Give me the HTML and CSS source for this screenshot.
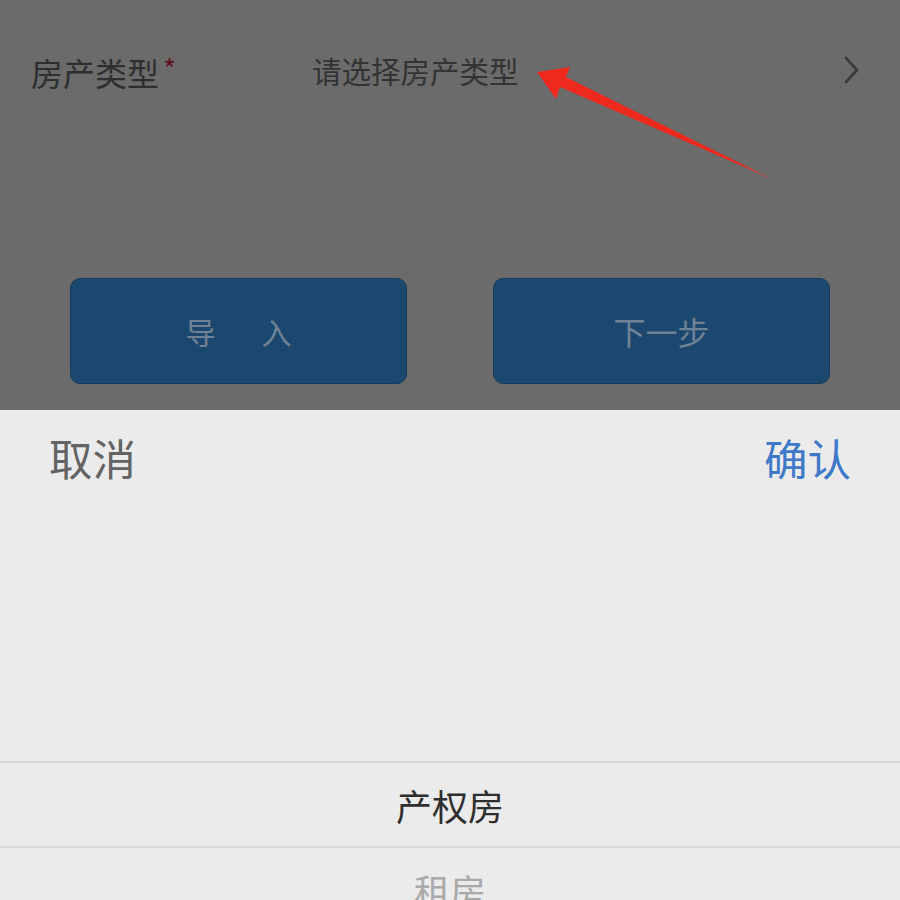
FILE: index.html
```html
<!DOCTYPE html>
<html lang="zh-CN">
<head>
<meta charset="utf-8">
<title>房产类型</title>
<link rel="stylesheet" href="styles.css">
</head>
<body>
<div class="page">
  <div class="overlay">
    <div class="form-row">
      <div class="label">房产类型<span class="req">*</span></div>
      <div class="value">请选择房产类型</div>
      <svg class="chevron" width="20" height="30" viewBox="0 0 20 30">
        <path d="M4 3 L15 15 L4 27" fill="none" stroke="#3a3a3a" stroke-width="2.6" stroke-linecap="round" stroke-linejoin="round"/>
      </svg>
    </div>
    <div class="buttons">
      <div class="btn"><span>导</span><span>入</span></div>
      <div class="btn wide"><span>下一步</span></div>
    </div>
    <svg class="arrow" width="900" height="410" viewBox="0 0 900 410">
      <polygon points="537,72 570,67 566,77 772,179 560,87 556,99" fill="#ee2a1f"/>
    </svg>
  </div>
  <div class="sheet">
    <div class="sheet-header">
      <span class="cancel">取消</span>
      <span class="confirm">确认</span>
    </div>
    <div class="picker">
      <div class="option selected">产权房</div>
      <div class="option faded">租房</div>
    </div>
  </div>
</div>
</body>
</html>
```

FILE: styles.css
```css
html, body {
  margin: 0;
  padding: 0;
}
body {
  width: 900px;
  height: 900px;
  overflow: hidden;
  font-family: "Noto Sans CJK SC", "Noto Sans", sans-serif;
  background: #ebebeb;
}
.page {
  width: 900px;
  height: 900px;
  display: flex;
  flex-direction: column;
}
.overlay {
  position: relative;
  height: 410px;
  background: #6b6b6b;
  flex: none;
}
.form-row {
  display: flex;
  align-items: center;
  height: 60px;
  padding: 41px 38px 0 31px;
}
.label {
  width: 281px;
  font-size: 32px;
  color: #2e2e2e;
  line-height: 1;
}
.req {
  color: #5e1420;
  font-size: 28px;
  margin-left: 4px;
  vertical-align: 6px;
}
.value {
  flex: 1;
  font-size: 29.5px;
  color: #333333;
  line-height: 1;
}
.chevron {
  display: block;
  margin-top: -2px;
}
.buttons {
  display: flex;
  gap: 86px;
  padding: 177px 0 0 70px;
}
.btn {
  width: 337px;
  height: 106px;
  box-sizing: border-box;
  border-radius: 10px;
  background: #1c4870;
  border: 1px solid #163b5c;
  display: flex;
  align-items: center;
  justify-content: center;
  gap: 46px;
  font-size: 30px;
  color: #6f8296;
  line-height: 1;
}
.wide {
  font-size: 32px;
}
.arrow {
  position: absolute;
  left: 0;
  top: 0;
}
.sheet {
  flex: 1;
  background: #ebebeb;
  display: flex;
  flex-direction: column;
}
.sheet-header {
  height: 96px;
  padding: 0 49px 4px;
  display: flex;
  align-items: center;
  justify-content: space-between;
  font-size: 43.5px;
  line-height: 1;
}
.cancel {
  color: #636363;
}
.confirm {
  color: #3e78c8;
}
.picker {
  padding-top: 251px;
}
.option {
  height: 83px;
  border-top: 2px solid #d8d8d8;
  display: flex;
  align-items: center;
  justify-content: center;
  font-size: 36px;
  line-height: 1;
}
.selected {
  color: #2e2e2e;
}
.faded {
  color: #a9a9a9;
  align-items: flex-start;
  padding-top: 24px;
  box-sizing: border-box;
}
```
